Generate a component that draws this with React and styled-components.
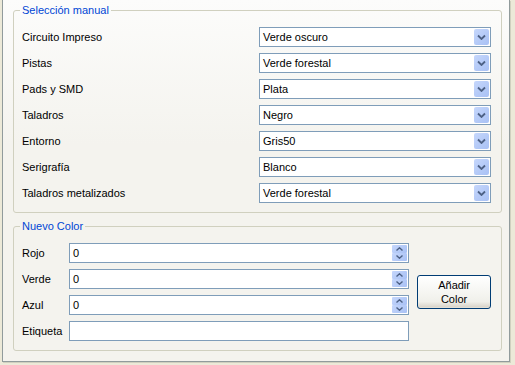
import React from "react";
import styled, { createGlobalStyle } from "styled-components";

const GlobalStyle = createGlobalStyle`
  html, body {
    margin: 0;
    padding: 0;
    background: #ece9d8;
  }
  body {
    font-family: "Liberation Sans", Arial, sans-serif;
    font-size: 11px;
    color: #000;
  }
`;

const Page = styled.div`
  width: 515px;
  height: 365px;
  padding-left: 2px;
  box-sizing: border-box;
  overflow: hidden;
`;

const Frame = styled.div`
  width: 508px;
  box-sizing: border-box;
  padding: 4px 7px 10px 10px;
  background: linear-gradient(#fcfcfb, #f4f3ee 40%);
  border-left: 1px solid #919b9c;
  border-right: 1px solid #919b9c;
  border-bottom: 1px solid #919b9c;
  box-shadow: 1px 1px 0 #d0d0bf;
`;

const Group = styled.fieldset`
  margin: ${(p) => (p.$first ? "0" : "7px 0 0")};
  padding: 10px 10px 9px 8px;
  border: 1px solid #d0d0bf;
  border-radius: 3px;
  min-width: 0;
`;

const Legend = styled.legend`
  margin-left: -2px;
  padding: 0 2px;
  line-height: 13px;
  color: #0046d5;
`;

const ComboList = styled.div`
  display: flex;
  flex-direction: column;
  gap: 6px;
`;

const Row = styled.div`
  display: grid;
  grid-template-columns: ${(p) => p.$label}px 1fr;
  align-items: center;
  height: 20px;
`;

const Label = styled.span`
  white-space: nowrap;
`;

const Box = styled.div`
  display: flex;
  align-items: center;
  height: 20px;
  box-sizing: border-box;
  border: 1px solid #7f9db9;
  background: #fff;
  padding: 0 1px 0 3px;
`;

const Value = styled.span`
  flex: 1;
  white-space: nowrap;
`;

const DropButton = styled.div`
  width: 15px;
  height: 16px;
  border-radius: 2px;
  background: linear-gradient(135deg, #c6d7fc, #b3c9f7 60%, #a9c1f5);
  display: flex;
  align-items: center;
  justify-content: center;
`;

const Spin = styled.div`
  display: flex;
  flex-direction: column;
  width: 15px;
  height: 16px;
`;

const SpinHalf = styled.div`
  flex: 1;
  background: linear-gradient(135deg, #c6d7fc, #b3c9f7 60%, #a9c1f5);
  border-radius: 1px;
  display: flex;
  align-items: center;
  justify-content: center;
`;

const ColorBody = styled.div`
  display: flex;
  align-items: center;
  gap: 8px;
`;

const Fields = styled.div`
  width: 388px;
  display: flex;
  flex-direction: column;
  gap: 6px;
`;

const AddButton = styled.button`
  width: 74px;
  height: 34px;
  padding: 0;
  font: inherit;
  line-height: 14px;
  color: #000;
  border: 1px solid #003c74;
  border-radius: 3px;
  background: linear-gradient(#ffffff, #f0f0ea 80%, #d6d0c5);
  box-shadow: inset 0 -1px 0 #e3e0d5;
`;

const Chevron = ({ up }) => (
  <svg width="9" height="6" viewBox="0 0 9 6">
    <path
      d={up ? "M1 5 L4.5 1.5 L8 5" : "M1 1.5 L4.5 5 L8 1.5"}
      fill="none"
      stroke="#4d6185"
      strokeWidth="1.8"
    />
  </svg>
);

const SmallChevron = ({ up }) => (
  <svg width="7" height="4" viewBox="0 0 7 4">
    <path
      d={up ? "M0.5 3.5 L3.5 0.8 L6.5 3.5" : "M0.5 0.5 L3.5 3.2 L6.5 0.5"}
      fill="none"
      stroke="#4d6185"
      strokeWidth="1.4"
    />
  </svg>
);

const layers = [
  ["Circuito Impreso", "Verde oscuro"],
  ["Pistas", "Verde forestal"],
  ["Pads y SMD", "Plata"],
  ["Taladros", "Negro"],
  ["Entorno", "Gris50"],
  ["Serigrafía", "Blanco"],
  ["Taladros metalizados", "Verde forestal"],
];

const channels = ["Rojo", "Verde", "Azul"];

export default function App() {
  return (
    <Page>
      <GlobalStyle />
      <Frame>
        <Group $first>
          <Legend>Selección manual</Legend>
          <ComboList>
            {layers.map(([name, color]) => (
              <Row key={name} $label={237}>
                <Label>{name}</Label>
                <Box>
                  <Value>{color}</Value>
                  <DropButton>
                    <Chevron />
                  </DropButton>
                </Box>
              </Row>
            ))}
          </ComboList>
        </Group>
        <Group>
          <Legend>Nuevo Color</Legend>
          <ColorBody>
            <Fields>
              {channels.map((c) => (
                <Row key={c} $label={47}>
                  <Label>{c}</Label>
                  <Box>
                    <Value>0</Value>
                    <Spin>
                      <SpinHalf>
                        <SmallChevron up />
                      </SpinHalf>
                      <SpinHalf>
                        <SmallChevron />
                      </SpinHalf>
                    </Spin>
                  </Box>
                </Row>
              ))}
              <Row $label={47}>
                <Label>Etiqueta</Label>
                <Box />
              </Row>
            </Fields>
            <AddButton>
              Añadir
              <br />
              Color
            </AddButton>
          </ColorBody>
        </Group>
      </Frame>
    </Page>
  );
}
